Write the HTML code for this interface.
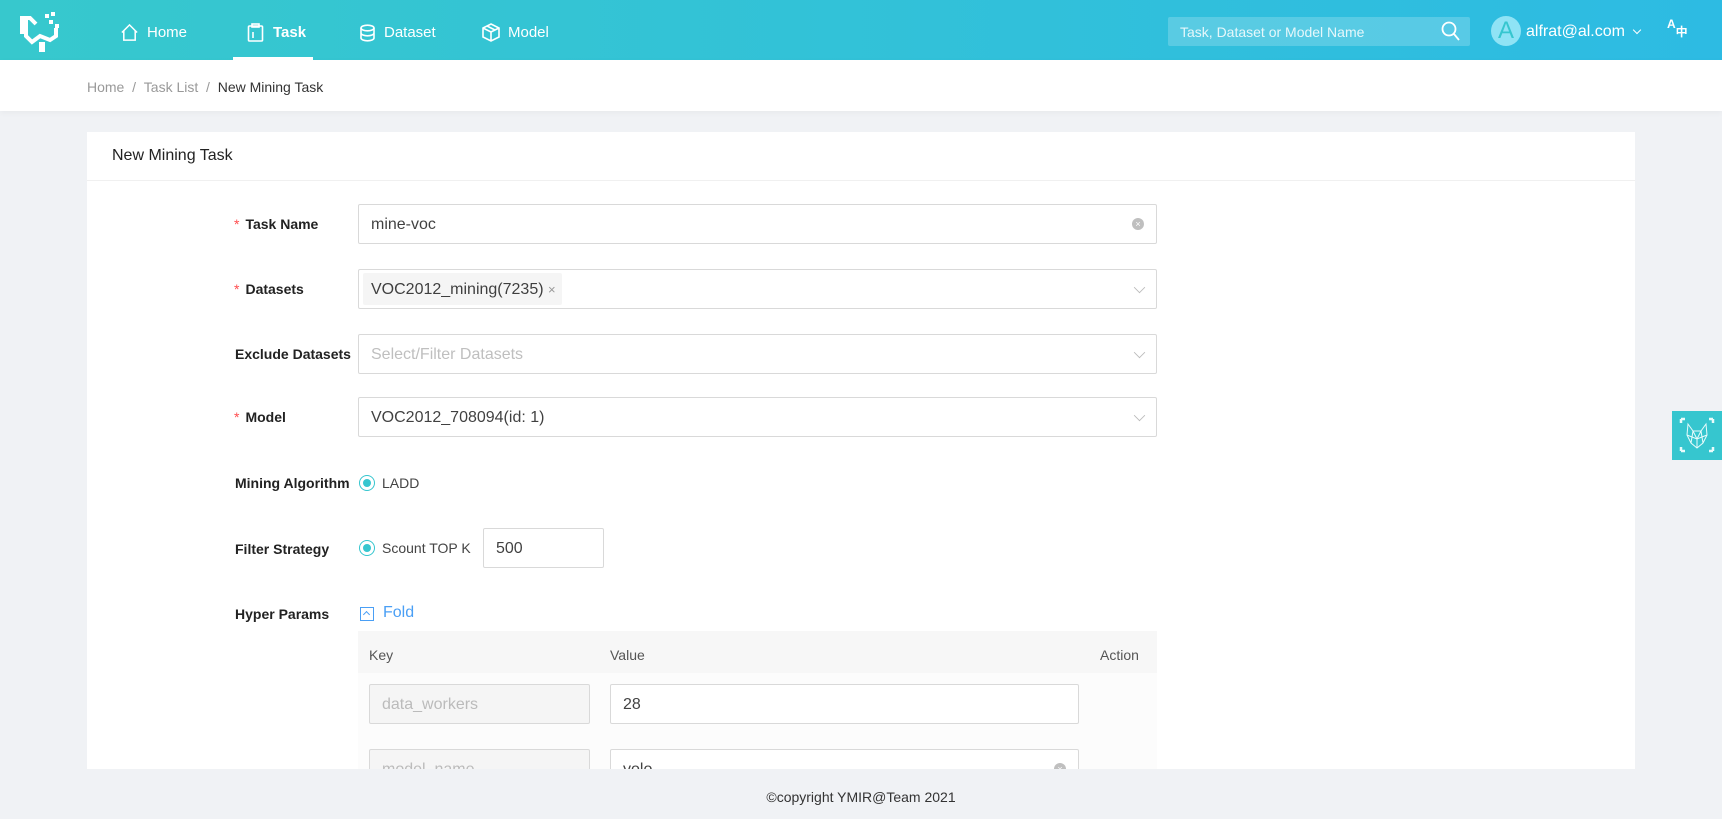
<!DOCTYPE html>
<html><head><meta charset="utf-8"><style>
*{box-sizing:border-box;margin:0;padding:0}
body{width:1722px;height:819px;overflow:hidden;background:#f0f2f5;font-family:"Liberation Sans",sans-serif;font-size:15px;color:rgba(0,0,0,.85);position:relative}
.a{position:absolute}
.hdr{left:0;top:0;width:1722px;height:60px;background:linear-gradient(90deg,#37c8cd,#2dbbe3)}
.nav{color:#fff;font-size:15px;top:23px;line-height:20px}
.bc{left:0;top:60px;width:1722px;height:51px;background:#fff;box-shadow:0 2px 6px rgba(0,0,0,.04)}
.card{left:87px;top:132px;width:1548px;height:637px;background:#fff}
.lbl{font-weight:bold;font-size:14px;color:#222;line-height:20px}
.lbl .s{color:#ff4d4f;font-weight:normal;margin-right:6px}
.inp{border:1px solid #d9d9d9;border-radius:2px;background:#fff;height:40px;line-height:40px;padding-left:12px;font-size:16px;color:rgba(0,0,0,.75)}
.chev{position:absolute;right:12px;top:13px;width:9px;height:9px;border-right:1px solid #bbb;border-bottom:1px solid #bbb;transform:rotate(45deg) scale(.9,.9)}
.radio{width:16px;height:16px;border-radius:50%;border:1px solid #36c6cf;background:#fff}
.radio:after{content:"";position:absolute;left:3px;top:3px;width:8px;height:8px;border-radius:50%;background:#36c6cf}
.clr{position:absolute;right:12px;top:13px;width:12px;height:12px;border-radius:50%;background:#bfbfbf;color:#fff;font-size:9px;line-height:12px;text-align:center}
</style></head><body>
<div class="a hdr"></div>
<svg class="a" style="left:18px;top:10px" width="44" height="44" viewBox="0 0 44 44" fill="none" stroke="#fff" stroke-width="4">
<path d="M4 24 V8 h8 l6 6 M8 10 v16 l6 6 8-6 10 4 6-4 v-8"/>
<rect x="21" y="32" width="6" height="10" fill="#fff" stroke="none"/>
<rect x="27" y="4" width="4" height="4" fill="#fff" stroke="none"/><rect x="33" y="2" width="4" height="4" fill="#fff" stroke="none"/><rect x="31" y="10" width="4" height="4" fill="#fff" stroke="none"/><rect x="37" y="14" width="4" height="4" fill="#fff" stroke="none"/>
</svg>
<svg class="a" style="left:120px;top:23px" width="19" height="19" viewBox="0 0 20 20" fill="none" stroke="#fff" stroke-width="1.6"><path d="M2 10 L10 2 L18 10 M4 8 V18 H16 V8"/></svg>
<div class="a nav" style="left:147px">Home</div>
<svg class="a" style="left:247px;top:23px" width="17" height="19" viewBox="0 0 17 19" fill="none" stroke="#fff" stroke-width="1.6"><rect x="1.5" y="3" width="14" height="15" rx="1"/><rect x="5" y="1" width="7" height="3"/><path d="M6 9v6"/></svg>
<div class="a nav" style="left:273px;font-weight:bold">Task</div>
<div class="a" style="left:233px;top:57px;width:80px;height:3px;background:#fff"></div>
<svg class="a" style="left:359px;top:24px" width="17" height="18" viewBox="0 0 17 18" fill="none" stroke="#fff" stroke-width="1.6"><ellipse cx="8.5" cy="4" rx="6.5" ry="2.8"/><path d="M2 4v10c0 1.6 3 2.8 6.5 2.8S15 15.6 15 14V4M2 9c0 1.6 3 2.8 6.5 2.8S15 10.6 15 9"/></svg>
<div class="a nav" style="left:384px">Dataset</div>
<svg class="a" style="left:482px;top:23px" width="18" height="19" viewBox="0 0 18 19" fill="none" stroke="#fff" stroke-width="1.6"><path d="M9 1 L17 5 V14 L9 18 L1 14 V5 Z M1 5 L9 9 L17 5 M9 9 V18 M5 3 L13 7"/></svg>
<div class="a nav" style="left:508px">Model</div>
<div class="a" style="left:1168px;top:17px;width:302px;height:29px;background:rgba(255,255,255,.2);border-radius:2px"></div>
<div class="a" style="left:1180px;top:24px;font-size:14px;color:rgba(255,255,255,.85)">Task, Dataset or Model Name</div>
<svg class="a" style="left:1441px;top:21px" width="19" height="20" viewBox="0 0 19 20" fill="none" stroke="#fff" stroke-width="1.8"><circle cx="8" cy="8" r="6.5"/><path d="M13 13 L18 19"/></svg>
<div class="a" style="left:1491px;top:16px;width:30px;height:30px;border-radius:50%;background:#8fe3f5;color:#36c6cf;font-size:24px;line-height:30px;text-align:center">A</div>
<div class="a" style="left:1526px;top:23px;color:#fff;font-size:16px">alfrat@al.com</div>
<div class="a" style="left:1634px;top:27px;width:6px;height:6px;border-right:1.5px solid #fff;border-bottom:1.5px solid #fff;transform:rotate(45deg)"></div>
<div class="a" style="left:1667px;top:18px;color:#fff;font-size:12px;font-weight:bold;line-height:12px">A<span style="position:relative;top:8px;font-family:'Noto Sans CJK SC',sans-serif">中</span></div>
<div class="a bc"></div>
<div class="a" style="left:87px;top:79px;font-size:14px;color:#999">Home&nbsp;&nbsp;/&nbsp;&nbsp;Task List&nbsp;&nbsp;/&nbsp;&nbsp;<span style="color:#333">New Mining Task</span></div>
<div class="a card"></div>
<div class="a" style="left:112px;top:147px;font-size:16px;color:#222">New Mining Task</div>
<div class="a" style="left:87px;top:180px;width:1548px;height:1px;background:#f0f0f0"></div>

<div class="a lbl" style="left:234px;top:214px"><span class="s">*</span>Task Name</div>
<div class="a inp" style="left:358px;top:204px;width:799px">mine-voc<span class="clr">×</span></div>
<div class="a lbl" style="left:234px;top:279px"><span class="s">*</span>Datasets</div>
<div class="a inp" style="left:358px;top:269px;width:799px;padding-left:4px"><span style="display:inline-block;background:#f5f5f5;border-radius:2px;height:32px;line-height:34px;margin-top:3px;padding:0 6px 0 8px;vertical-align:top">VOC2012_mining(7235) <span style="color:#999;font-size:13px">×</span></span><i class="chev"></i></div>
<div class="a lbl" style="left:235px;top:344px">Exclude Datasets</div>
<div class="a inp" style="left:358px;top:334px;width:799px;color:#bfbfbf">Select/Filter Datasets<i class="chev"></i></div>
<div class="a lbl" style="left:234px;top:407px"><span class="s">*</span>Model</div>
<div class="a inp" style="left:358px;top:397px;width:799px">VOC2012_708094(id: 1)<i class="chev"></i></div>
<div class="a lbl" style="left:235px;top:473px">Mining Algorithm</div>
<div class="a radio" style="left:359px;top:475px"></div>
<div class="a" style="left:382px;top:475px;font-size:14px;color:#444">LADD</div>
<div class="a lbl" style="left:235px;top:539px">Filter Strategy</div>
<div class="a radio" style="left:359px;top:540px"></div>
<div class="a" style="left:382px;top:540px;font-size:14px;color:#444">Scount TOP K</div>
<div class="a inp" style="left:483px;top:528px;width:121px">500</div>
<div class="a lbl" style="left:235px;top:604px">Hyper Params</div>
<div class="a" style="left:360px;top:607px;width:14px;height:14px;border:1.5px solid #4a9ff5"></div>
<div class="a" style="left:364px;top:612px;width:5px;height:5px;border-left:1.5px solid #4a9ff5;border-top:1.5px solid #4a9ff5;transform:rotate(45deg)"></div>
<div class="a" style="left:383px;top:604px;font-size:16px;color:#4a9ff5">Fold</div>
<div class="a" style="left:358px;top:631px;width:799px;height:138px;background:#fcfcfc"></div>
<div class="a" style="left:358px;top:631px;width:799px;height:42px;background:#f7f7f7"></div>
<div class="a" style="left:369px;top:647px;font-size:14px;color:#555">Key</div>
<div class="a" style="left:610px;top:647px;font-size:14px;color:#555">Value</div>
<div class="a" style="left:1100px;top:647px;font-size:14px;color:#555">Action</div>
<div class="a inp" style="left:369px;top:684px;width:221px;background:#f5f5f5;color:#bbb">data_workers</div>
<div class="a inp" style="left:610px;top:684px;width:469px">28</div>
<div class="a inp" style="left:369px;top:749px;width:221px;background:#f5f5f5;color:#bbb">model_name</div>
<div class="a inp" style="left:610px;top:749px;width:469px">yolo<span class="clr">×</span></div>
<div class="a" style="left:0;top:769px;width:1722px;height:50px;background:#f0f2f5"></div>
<div class="a" style="left:0;top:789px;width:1722px;text-align:center;font-size:14px;color:#333">©copyright YMIR@Team 2021</div>
<div class="a" style="left:1672px;top:411px;width:50px;height:49px;background:#36c6cf"></div>
<svg class="a" style="left:1679px;top:417px" width="36" height="36" viewBox="0 0 36 36" fill="none" stroke="#e8fbfb" stroke-width="1"><path d="M2 2h4M2 2v4M34 2h-4M34 2v4M2 34h4M2 34v-4M34 34h-4M34 34v-4" stroke-width="2.5"/><path d="M9 7 L14 14 H22 L27 7 L28 18 L24 26 L18 31 L12 26 L8 18 Z M14 14 L12 26 M22 14 L24 26 M8 18 L18 22 L28 18 M18 22 V31 M14 14 L18 22 L22 14"/></svg>
</body></html>
